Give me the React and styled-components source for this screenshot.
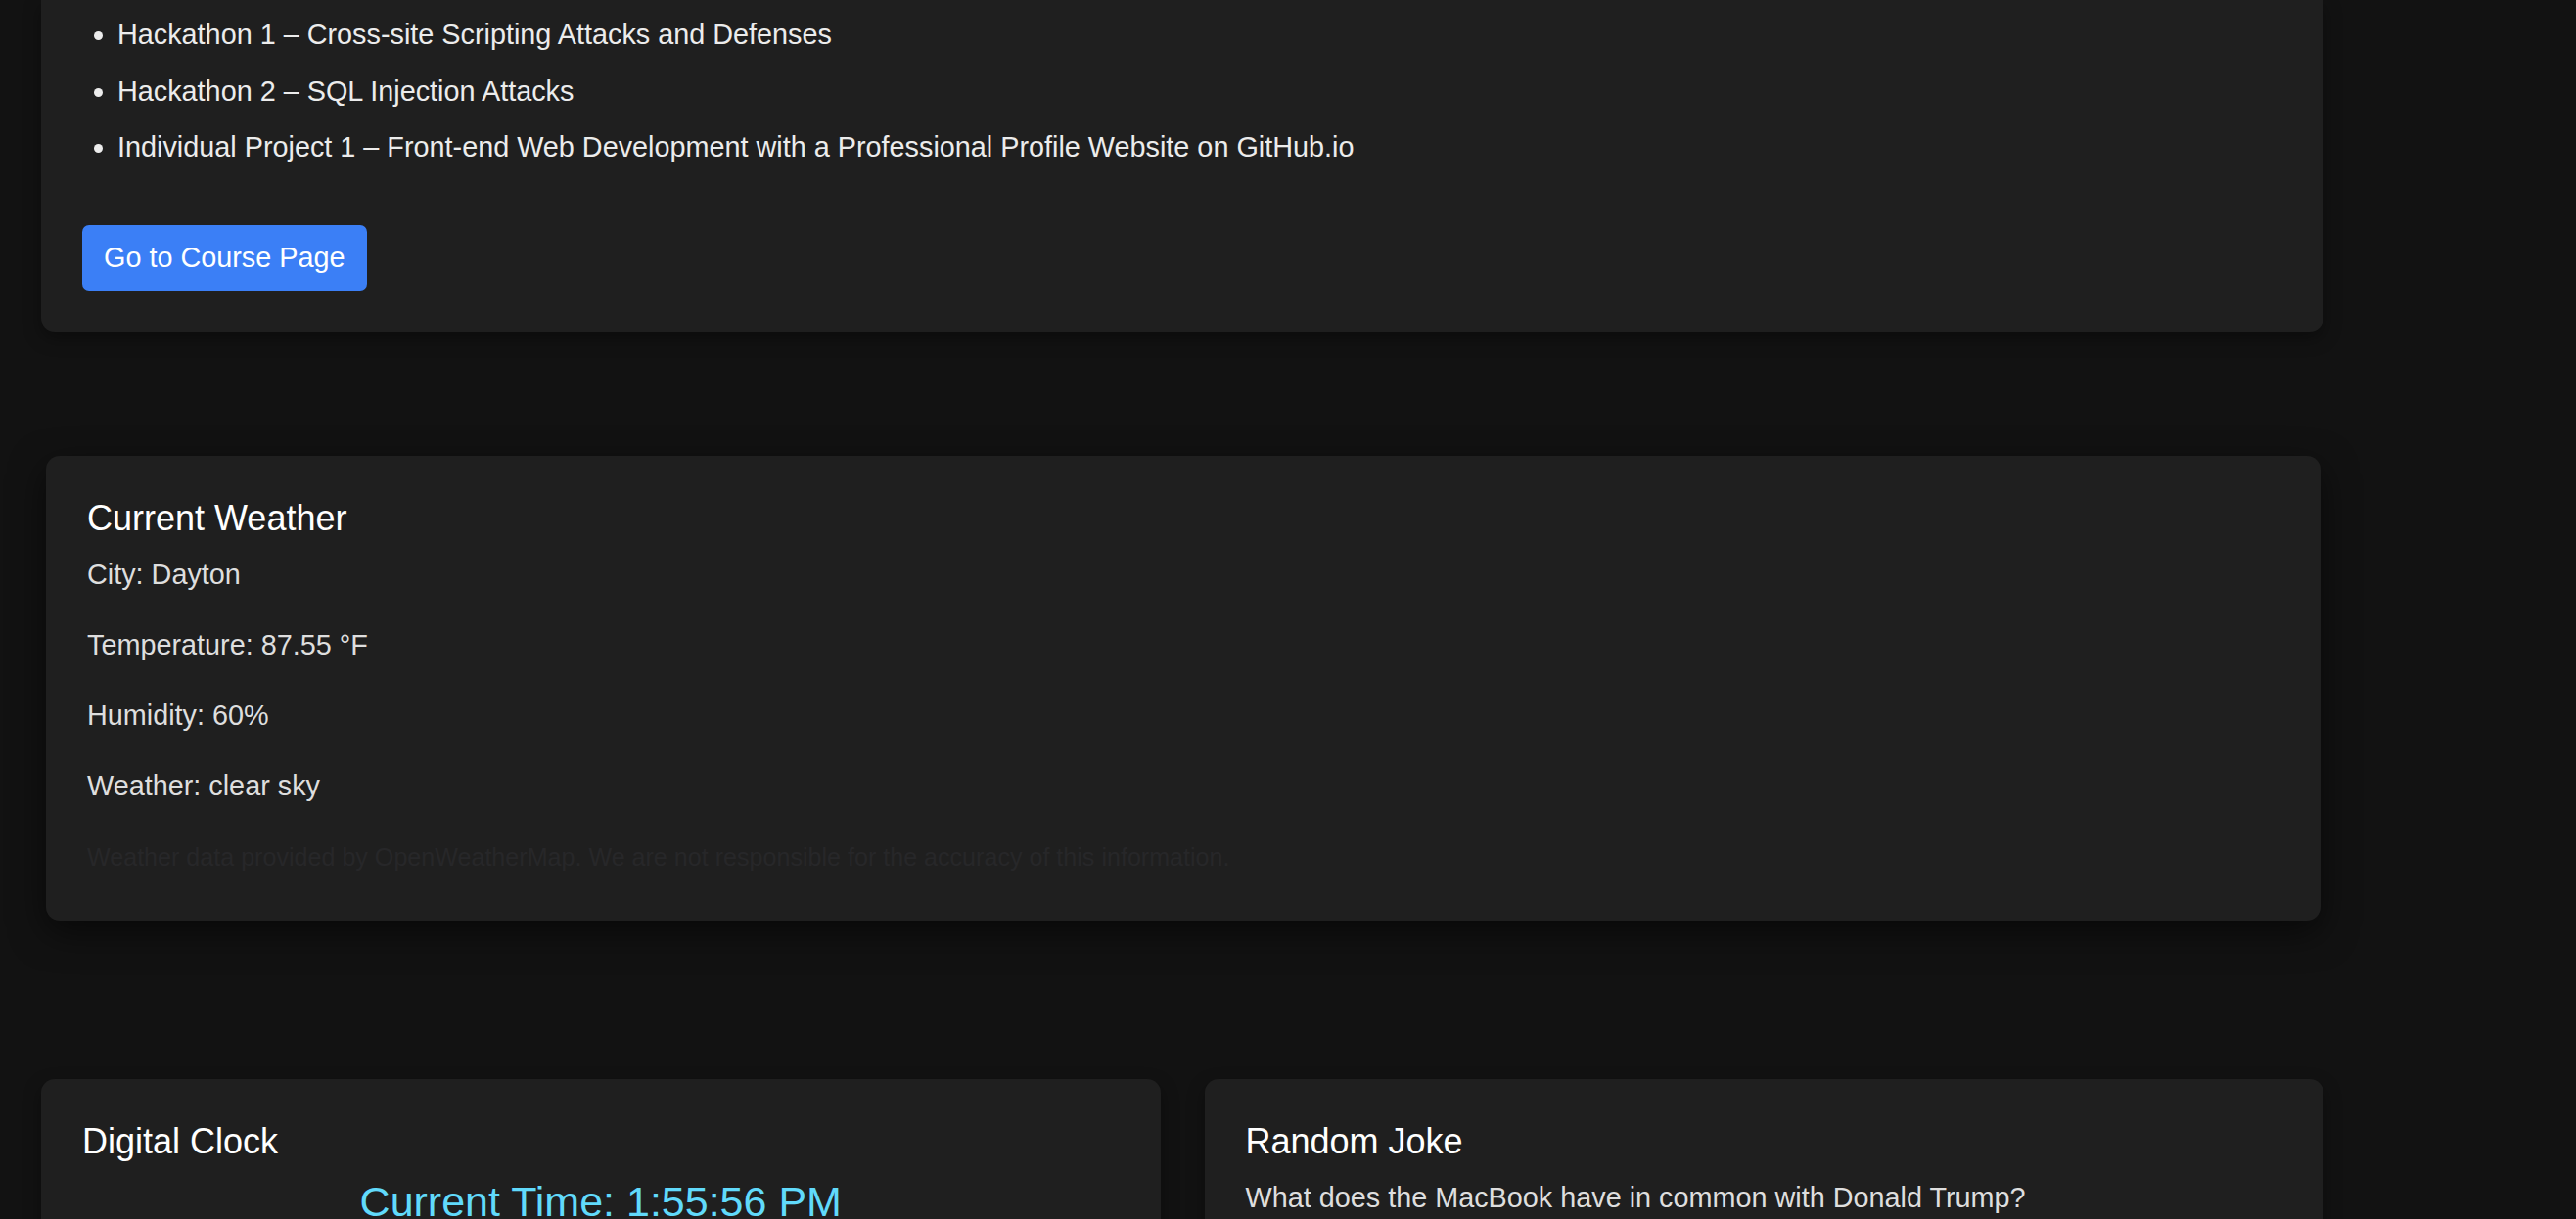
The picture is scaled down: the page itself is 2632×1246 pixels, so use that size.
import styled, { createGlobalStyle } from 'styled-components';

const GlobalStyle = createGlobalStyle`
  body {
    margin: 0;
    background: #121212;
    color: #e0e0e0;
    font-family: "Liberation Sans", Arial, sans-serif;
    font-size: 28.8px;
    line-height: 42.75px;
  }
`;

const assignments = [
  'Hackathon 1 – Cross-site Scripting Attacks and Defenses',
  'Hackathon 2 – SQL Injection Attacks',
  'Individual Project 1 – Front-end Web Development with a Professional Profile Website on GitHub.io',
];

const weather = [
  ['City', 'Dayton'],
  ['Temperature', '87.55 °F'],
  ['Humidity', '60%'],
  ['Weather', 'clear sky'],
];

export default function App() {
  return (
    <>
      <GlobalStyle />
      <Page>
        <Card $cut>
          <AssignmentList>
            {assignments.map((a) => (
              <li key={a}>{a}</li>
            ))}
          </AssignmentList>
          <CourseButton>Go to Course Page</CourseButton>
        </Card>

        <WeatherCard>
          <CardTitle>Current Weather</CardTitle>
          {weather.map(([label, value]) => (
            <InfoLine key={label}>
              {label}: {value}
            </InfoLine>
          ))}
          <Disclaimer>
            Weather data provided by OpenWeatherMap. We are not responsible for the accuracy of this information.
          </Disclaimer>
        </WeatherCard>

        <WidgetGrid>
          <Card>
            <CardTitle>Digital Clock</CardTitle>
            <ClockTime>Current Time: 1:55:56 PM</ClockTime>
          </Card>
          <Card>
            <CardTitle>Random Joke</CardTitle>
            <JokeText>What does the MacBook have in common with Donald Trump?</JokeText>
          </Card>
        </WidgetGrid>
      </Page>
    </>
  );
}

const Page = styled.main`
  box-sizing: border-box;
  width: 2332px;
  margin-left: 42px;
  padding-bottom: 300px;
`;

const Card = styled.section`
  box-sizing: border-box;
  background: #1f1f1f;
  border-radius: ${(p) => (p.$cut ? '0 0 14px 14px' : '14px')};
  padding: ${(p) => (p.$cut ? '14px 42px 42px' : '42px')};
  box-shadow: 0 7px 18px rgba(0, 0, 0, 0.35);
`;

const WeatherCard = styled(Card)`
  margin: 127px 3px 0 5px;
  padding-bottom: 46px;
  box-shadow: 0 12px 36px rgba(0, 0, 0, 0.55);
`;

const AssignmentList = styled.ul`
  margin: 0 0 58px;
  padding-left: 36px;
  color: #ececec;

  li + li {
    margin-top: 14.75px;
  }
`;

const CourseButton = styled.button`
  display: inline-block;
  height: 67px;
  padding: 0 22px;
  border: none;
  border-radius: 7px;
  background: #3b7ff6;
  color: #ffffff;
  font-family: inherit;
  font-size: 28.8px;
  line-height: 1;
  cursor: pointer;
`;

const CardTitle = styled.h3`
  margin: 0 0 15px;
  font-size: 36px;
  font-weight: 400;
  line-height: 1.2;
  color: #ffffff;
`;

const InfoLine = styled.p`
  margin: 0;
  color: #dedede;

  & + & {
    margin-top: 29.25px;
  }
`;

const Disclaimer = styled.p`
  margin: 33px 0 0;
  font-size: 25.1px;
  line-height: 37.5px;
  color: #272729;
`;

const WidgetGrid = styled.div`
  display: grid;
  grid-template-columns: 1fr 1fr;
  gap: 45px;
  margin-top: 162px;
`;

const ClockTime = styled.div`
  text-align: center;
  font-size: 43px;
  line-height: 1.2;
  color: #61dafb;
`;

const JokeText = styled.p`
  margin: 0;
  color: #dedede;
`;
